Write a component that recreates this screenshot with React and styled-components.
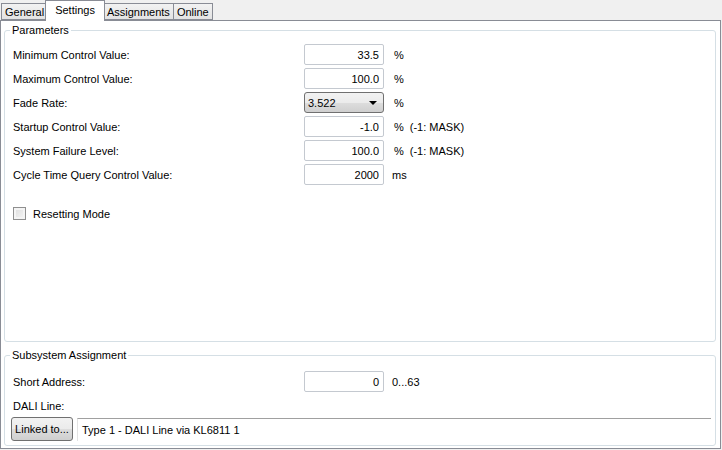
import React from 'react'
import styled, { createGlobalStyle } from 'styled-components'

const GlobalStyle = createGlobalStyle`
  html, body {
    margin: 0;
    padding: 0;
    background: #f0f0f0;
  }
  body {
    font-family: "Liberation Sans", Arial, sans-serif;
    font-size: 11px;
    color: #000;
  }
`

const Window = styled.div`
  width: 722px;
  height: 450px;
  display: flex;
  flex-direction: column;
  background: #f0f0f0;
`

const TabStrip = styled.div`
  display: flex;
  align-items: flex-end;
  height: 20px;
  padding-left: 1px;
  position: relative;
  z-index: 1;
`

const Tab = styled.div`
  height: ${({ active }) => (active ? '21px' : '17px')};
  margin-bottom: ${({ active }) => (active ? '-1px' : '0')};
  margin-left: ${({ active }) => (active ? '-2px' : '0')};
  margin-right: ${({ active }) => (active ? '-2px' : '0')};
  padding: 0 ${({ active }) => (active ? '9px' : '3px')};
  box-sizing: border-box;
  display: flex;
  align-items: ${({ active }) => (active ? 'flex-start' : 'center')};
  padding-top: ${({ active }) => (active ? '3px' : '0')};
  border: 1px solid #898c95;
  border-bottom: ${({ active }) => (active ? 'none' : '1px solid #898c95')};
  border-right: ${({ active }) => (active ? '1px solid #898c95' : 'none')};
  background: ${({ active }) => (active ? '#ffffff' : 'linear-gradient(#f2f2f2, #e3e3e3)')};
  position: relative;
  z-index: ${({ active }) => (active ? 2 : 1)};
  &:last-child {
    border-right: 1px solid #898c95;
  }
`

const Panel = styled.div`
  flex: 1;
  margin-right: 1px;
  margin-bottom: 1px;
  background: #fff;
  border: 1px solid #898c95;
  display: flex;
  flex-direction: column;
  padding: 2px 4px 2px 3px;
  gap: 6px;
`

const Group = styled.fieldset`
  margin: 0;
  padding: 0 7px 0 8px;
  border: 1px solid #d5dfe5;
  border-radius: 3px;
  height: ${({ h }) => h}px;
  box-sizing: border-box;
  min-width: 0;
`

const Legend = styled.legend`
  padding: 0 2px;
  margin-left: -3px;
  font-size: 11px;
  line-height: 14px;
`

const Rows = styled.div`
  display: flex;
  flex-direction: column;
  gap: 3px;
  padding-top: ${({ top }) => top}px;
`

const Row = styled.div`
  display: grid;
  grid-template-columns: 291px 80px auto;
  align-items: center;
  height: 21px;
`

const Label = styled.span`
  white-space: nowrap;
`

const NumberBox = styled.div`
  height: 21px;
  box-sizing: border-box;
  border: 1px solid #c4c9d0;
  border-radius: 2px;
  background: #fff;
  display: flex;
  align-items: center;
  justify-content: flex-end;
  padding-right: 4px;
`

const Select = styled.div`
  height: 21px;
  box-sizing: border-box;
  border: 1px solid #707070;
  border-radius: 3px;
  background: linear-gradient(#f2f2f2 0%, #ebebeb 50%, #dddddd 51%, #cfcfcf 100%);
  display: flex;
  align-items: center;
  justify-content: space-between;
  padding: 0 6px 0 3px;
`

const Arrow = styled.span`
  width: 0;
  height: 0;
  border-left: 4px solid transparent;
  border-right: 4px solid transparent;
  border-top: 4px solid #000;
`

const Unit = styled.span`
  padding-left: ${({ pad }) => pad}px;
  white-space: nowrap;
  display: flex;
  gap: 6px;
`

const CheckRow = styled.label`
  display: flex;
  align-items: center;
  gap: 7px;
  margin-top: 22px;
`

const Check = styled.span`
  width: 13px;
  height: 13px;
  box-sizing: border-box;
  border: 1px solid #8f8f8f;
  background: linear-gradient(135deg, #dcdcdc, #f6f6f6);
  box-shadow: inset 0 0 0 2px #f4f4f4;
`

const LineRow = styled.div`
  display: flex;
  align-items: center;
  gap: 4px;
  margin-top: 1px;
  margin-left: -2px;
`

const Button = styled.div`
  width: 62px;
  height: 24px;
  box-sizing: border-box;
  border: 1px solid #707070;
  border-radius: 3px;
  background: linear-gradient(#f2f2f2 0%, #ebebeb 50%, #dddddd 51%, #cfcfcf 100%);
  display: flex;
  align-items: center;
  justify-content: center;
`

const LineField = styled.div`
  flex: 1;
  height: 23px;
  box-sizing: border-box;
  border-top: 1px solid #a0a0a0;
  border-left: 1px solid #e3e3e3;
  display: flex;
  align-items: center;
  padding-left: 4px;
  margin-right: -3px;
`

const params = [
  { label: 'Minimum Control Value:', value: '33.5', unit: '%' },
  { label: 'Maximum Control Value:', value: '100.0', unit: '%' },
  { label: 'Fade Rate:', value: '3.522', unit: '%', select: true },
  { label: 'Startup Control Value:', value: '-1.0', unit: '%', note: '(-1: MASK)' },
  { label: 'System Failure Level:', value: '100.0', unit: '%', note: '(-1: MASK)' },
  { label: 'Cycle Time Query Control Value:', value: '2000', unit: 'ms' }
]

export default function App () {
  return (
    <>
      <GlobalStyle />
      <Window>
        <TabStrip>
          <Tab>General</Tab>
          <Tab active>Settings</Tab>
          <Tab>Assignments</Tab>
          <Tab>Online</Tab>
        </TabStrip>
        <Panel>
          <Group h={319}>
            <Legend>Parameters</Legend>
            <Rows top={7}>
              {params.map((p) => (
                <Row key={p.label}>
                  <Label>{p.label}</Label>
                  {p.select
                    ? (
                      <Select>
                        <span>{p.value}</span>
                        <Arrow />
                      </Select>
                      )
                    : <NumberBox>{p.value}</NumberBox>}
                  <Unit pad={p.unit === 'ms' ? 8 : 10}>
                    <span>{p.unit}</span>
                    {p.note ? <span>{p.note}</span> : null}
                  </Unit>
                </Row>
              ))}
            </Rows>
            <CheckRow>
              <Check />
              <span>Resetting Mode</span>
            </CheckRow>
          </Group>
          <Group h={98}>
            <Legend>Subsystem Assignment</Legend>
            <Rows top={9}>
              <Row>
                <Label>Short Address:</Label>
                <NumberBox>0</NumberBox>
                <Unit pad={8}><span>0...63</span></Unit>
              </Row>
              <Row>
                <Label>DALI Line:</Label>
              </Row>
            </Rows>
            <LineRow>
              <Button>Linked to...</Button>
              <LineField>Type 1 - DALI Line via KL6811 1</LineField>
            </LineRow>
          </Group>
        </Panel>
      </Window>
    </>
  )
}
